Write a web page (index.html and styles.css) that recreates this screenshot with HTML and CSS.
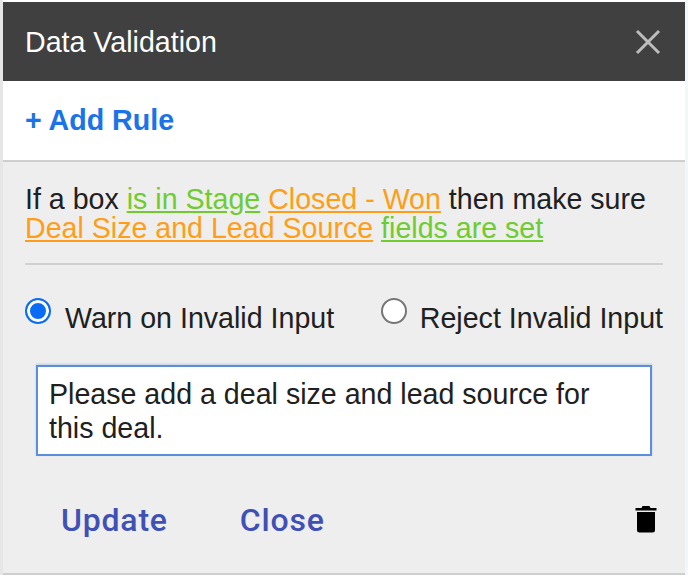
FILE: index.html
```html
<!DOCTYPE html>
<html lang="en">
<head>
<meta charset="utf-8">
<title>Data Validation</title>
<link rel="stylesheet" href="styles.css">
</head>
<body>
<div class="dialog">
  <header class="titlebar">
    <h1 class="title">Data Validation</h1>
    <svg class="close-icon" width="26" height="26" viewBox="0 0 26 26" aria-label="Close"><path d="M2 2 L24 24 M24 2 L2 24" stroke="#bdbdbd" stroke-width="3" fill="none"/></svg>
  </header>
  <div class="addbar"><a class="add-rule">+ Add Rule</a></div>
  <section class="panel">
    <p class="sentence">If a box <a class="green">is in Stage</a> <a class="orange">Closed - Won</a> then make sure<br><a class="orange">Deal Size and Lead Source</a> <a class="green">fields are set</a></p>
    <hr class="divider">
    <div class="options">
      <label class="option"><span class="radio checked"></span><span class="option-text">Warn on Invalid Input</span></label>
      <label class="option"><span class="radio"></span><span class="option-text">Reject Invalid Input</span></label>
    </div>
    <div class="message">Please add a deal size and lead source for this deal.</div>
    <div class="actions">
      <a class="action">Update</a>
      <a class="action">Close</a>
      <svg class="trash" width="22" height="28" viewBox="0 0 22 28" aria-label="Delete"><path d="M7.5 1 L14.5 1 L15.5 3 L21.5 3 L21.5 5.5 L0.5 5.5 L0.5 3 L6.5 3 Z M2 7 L20 7 L20 25 Q20 27.5 17.5 27.5 L4.5 27.5 Q2 27.5 2 25 Z" fill="#000"/></svg>
    </div>
  </section>
</div>
</body>
</html>
```
FILE: styles.css
```css
html, body {
  margin: 0;
  padding: 0;
  background: #fff;
}
body {
  width: 688px;
  height: 580px;
  overflow: hidden;
  font-family: "Liberation Sans", Arial, sans-serif;
  color: #202020;
}
.dialog {
  width: 682px;
  margin-left: 3px;
  padding-top: 2px;
  box-shadow: -3px 0 0 #e6e6e6, 3px 0 0 #f3f6fb;
}
.titlebar {
  box-sizing: border-box;
  height: 79px;
  background: #404040;
  display: flex;
  align-items: center;
  justify-content: space-between;
  padding: 0 24px 0 22px;
}
.title {
  margin: 2px 0 0;
  font-size: 28.6px;
  font-weight: 400;
  color: #fff;
}
.close-icon {
  display: block;
}
.addbar {
  height: 79px;
  background: #fff;
  border-bottom: 2px solid #cfcfcf;
  display: flex;
  align-items: center;
  padding-left: 22px;
}
.add-rule {
  font-size: 28.6px;
  font-weight: 700;
  color: #1a73e8;
}
.panel {
  height: 413px;
  box-sizing: border-box;
  background: #eeeeee;
  border-bottom: 2px solid #cfcfcf;
  padding: 23px 22px 0;
}
.sentence {
  margin: 0;
  font-size: 28.6px;
  line-height: 29px;
}
.green {
  color: #6fcc2e;
  text-decoration: underline;
}
.orange {
  color: #ff9e16;
  text-decoration: underline;
}
.divider {
  border: 0;
  height: 2px;
  background: #d0d0d0;
  margin: 20px 0 0;
}
.options {
  display: flex;
  justify-content: space-between;
  margin-top: 33px;
}
.option {
  display: flex;
  align-items: flex-start;
  font-size: 28.6px;
  line-height: 32px;
}
.option-text {
  padding-top: 4px;
}
.radio {
  box-sizing: border-box;
  width: 26px;
  height: 26px;
  margin: 0 13px 0 0;
  border: 2px solid #767676;
  border-radius: 50%;
  background: #fff;
}
.radio.checked {
  margin-right: 14px;
  border-color: #0a6cf5;
  background: #0a6cf5;
  box-shadow: inset 0 0 0 3px #fff;
}
.message {
  box-sizing: border-box;
  width: 616px;
  height: 91px;
  margin: 31px 0 0 11px;
  padding: 10px 11px;
  background: #fff;
  border: 2px solid #5b8fdc;
  box-shadow: 0 -1px 2px rgba(91, 143, 220, 0.35);
  font-size: 28.6px;
  line-height: 34px;
}
.actions {
  display: flex;
  align-items: center;
  margin-top: 45px;
  padding-left: 36px;
  gap: 72px;
}
.action {
  font-family: Roboto, sans-serif;
  font-weight: 500;
  font-size: 32px;
  letter-spacing: 0.8px;
  color: #3f51b5;
}
.trash {
  margin-left: auto;
  margin-right: 6px;
  margin-bottom: 3px;
}
```
